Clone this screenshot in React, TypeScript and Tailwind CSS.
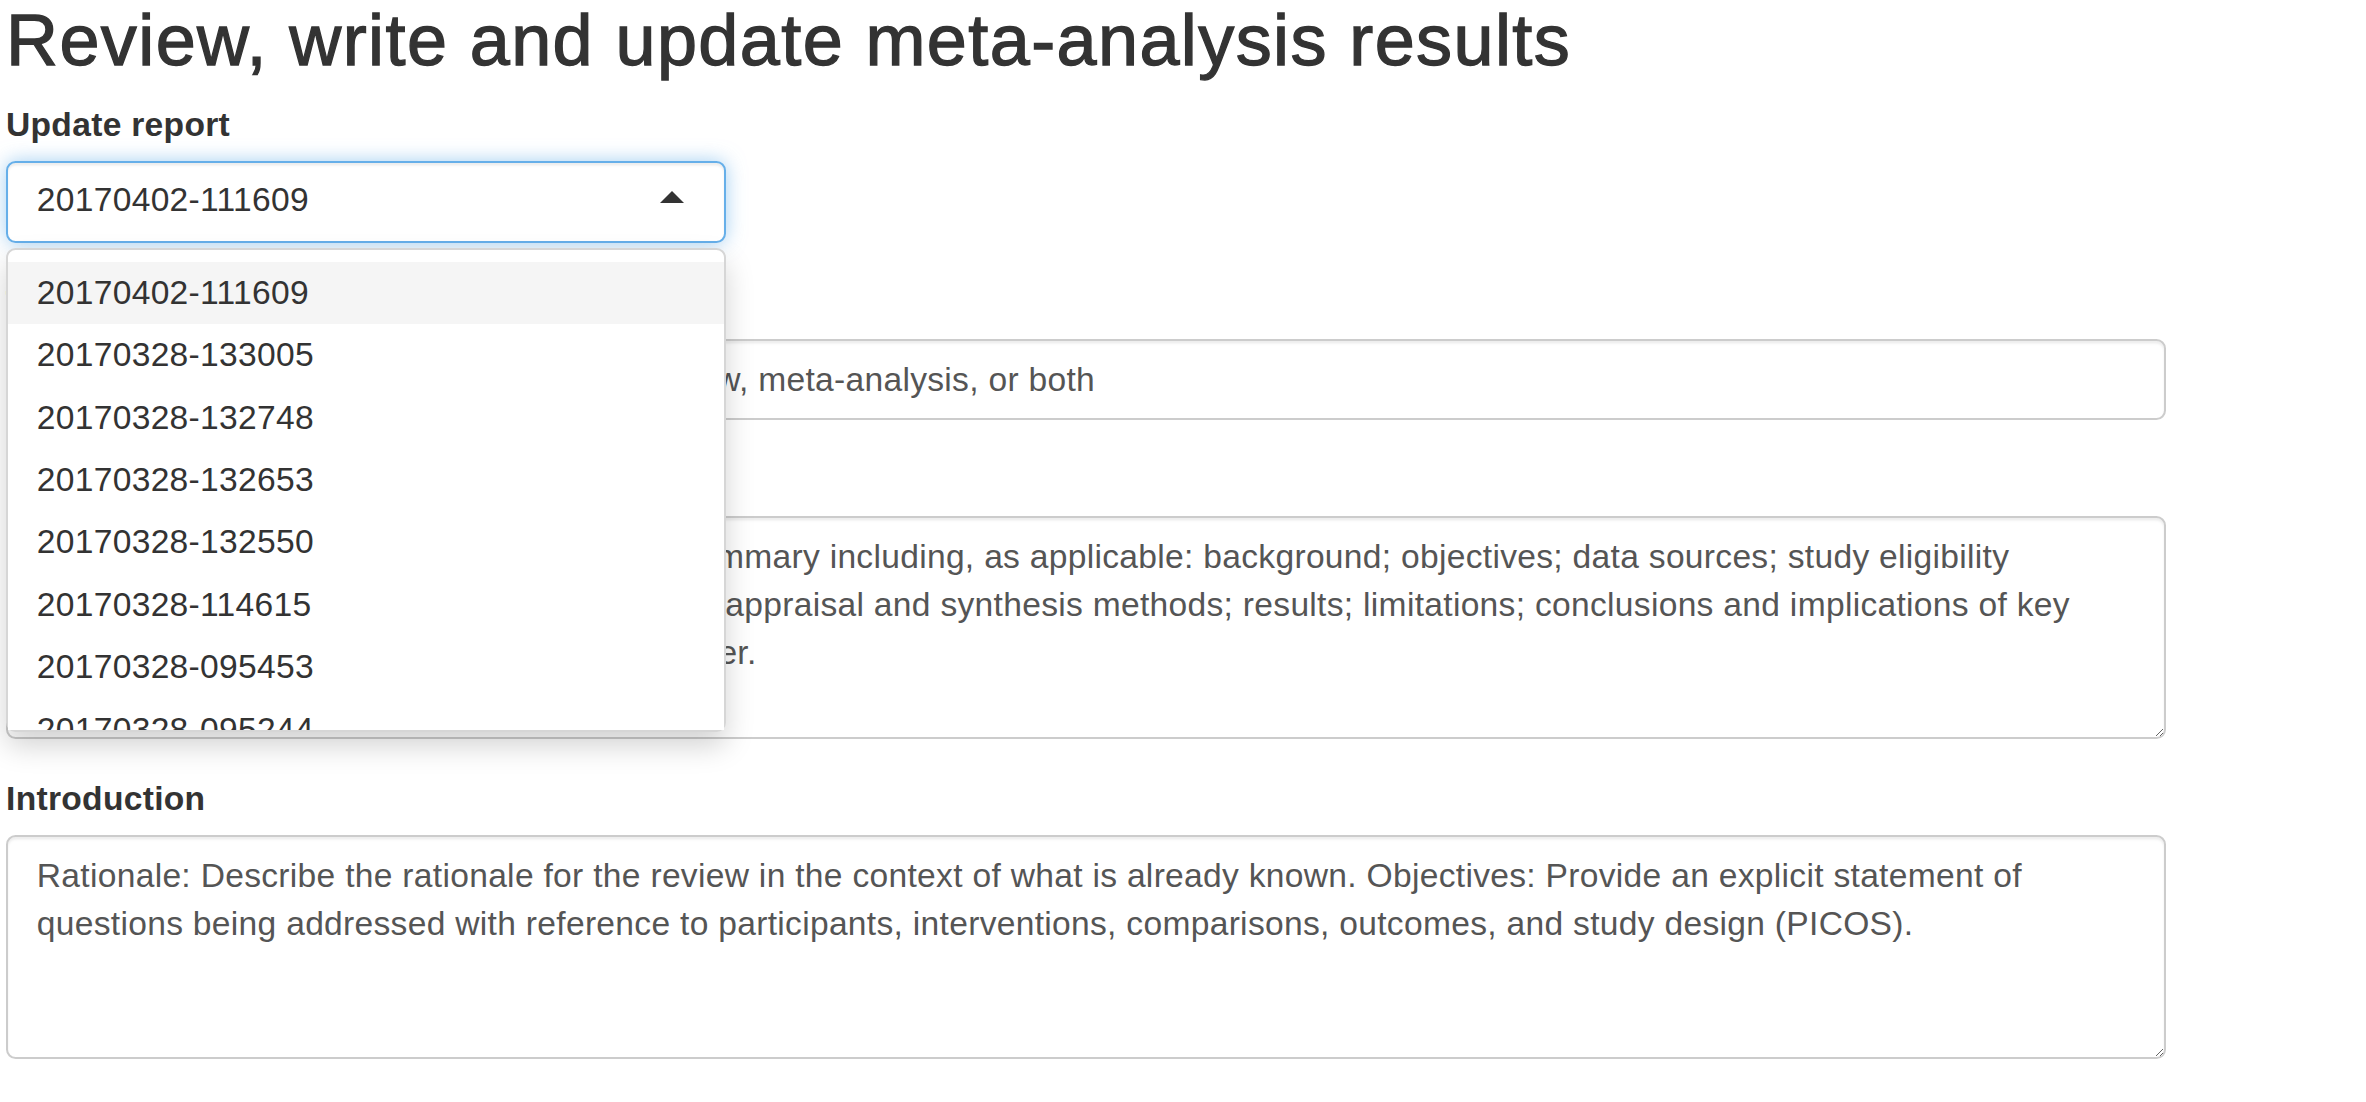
import React from "react";

const reports = [
  "20170402-111609",
  "20170328-133005",
  "20170328-132748",
  "20170328-132653",
  "20170328-132550",
  "20170328-114615",
  "20170328-095453",
  "20170328-095244",
  "20170328-094812",
];

const abstractText =
  "Structured summary: Provide a structured summary including, as applicable: background; objectives; data sources; study eligibility\ncriteria, participants, and interventions; study appraisal and synthesis methods; results; limitations; conclusions and implications of key\nfindings; systematic review registration number.";

const introText =
  "Rationale: Describe the rationale for the review in the context of what is already known. Objectives: Provide an explicit statement of\nquestions being addressed with reference to participants, interventions, comparisons, outcomes, and study design (PICOS).";

function ReportSelect() {
  return (
    <div className="relative w-[720px]">
      <div className="flex h-[81.6px] items-center justify-between rounded-[9.6px] border-[2.4px] border-[#66afe9] bg-white pl-[28.8px] pr-[39.6px] shadow-[inset_0_2.4px_2.4px_rgba(0,0,0,0.075),0_0_19px_rgba(102,175,233,0.6)]">
        <span className="pb-[4px] text-[#333]">{reports[0]}</span>
        <svg width="24" height="12" viewBox="0 0 24 12" className="mb-[10px]">
          <polygon points="0,12 12,0 24,12" fill="#333" />
        </svg>
      </div>

      <div className="absolute left-0 right-0 top-full z-10 mt-[4.8px] rounded-[9.6px] border-[2.4px] border-[#d6d6d6] bg-white shadow-[0_14px_29px_rgba(0,0,0,0.175)]">
        <div className="max-h-[480px] overflow-hidden py-[12px]">
          {reports.map((r, i) => (
            <div
              key={r}
              className={`h-[62.4px] px-[28.8px] py-[7.2px] text-[#333] ${
                i === 0 ? "bg-[#f5f5f5]" : "bg-white"
              }`}
            >
              {r}
            </div>
          ))}
        </div>
      </div>
    </div>
  );
}

function FieldLabel({ children }: { children: React.ReactNode }) {
  return <label className="mb-[12px] block font-bold text-[#333]">{children}</label>;
}

const controlClass =
  "block w-full rounded-[9.6px] border-[2.4px] border-[#ccc] bg-white px-[28.8px] py-[14.4px] text-[#555] shadow-[inset_0_2.4px_2.4px_rgba(0,0,0,0.075)] outline-none";

export default function App() {
  return (
    <div className="min-h-[1102px] bg-white pl-[6px] pt-[1px] font-['Liberation_Sans',Arial,sans-serif] text-[33.6px] leading-[48px] tracking-[0.3px] text-[#333]">
      <div className="w-[2160px]">
        <h2 className="mb-[21px] text-[72px] font-medium leading-[79.2px] tracking-[1.4px] text-[#333] [-webkit-text-stroke:1.3px_#333]">
          Review, write and update meta-analysis results
        </h2>

        <div className="mb-[36px]">
          <FieldLabel>Update report</FieldLabel>
          <ReportSelect />
        </div>

        <div className="mb-[36px]">
          <FieldLabel>Title</FieldLabel>
          <input
            type="text"
            defaultValue="Title: Identify the report as a systematic review, meta-analysis, or both"
            className={`${controlClass} h-[81.6px]`}
          />
        </div>

        <div className="mb-[36px]">
          <FieldLabel>Abstract</FieldLabel>
          <textarea defaultValue={abstractText} className={`${controlClass} h-[223px] leading-[48px]`} />
        </div>

        <div className="mb-[36px]">
          <FieldLabel>Introduction</FieldLabel>
          <textarea defaultValue={introText} className={`${controlClass} h-[224px] leading-[48px]`} />
        </div>
      </div>
    </div>
  );
}
